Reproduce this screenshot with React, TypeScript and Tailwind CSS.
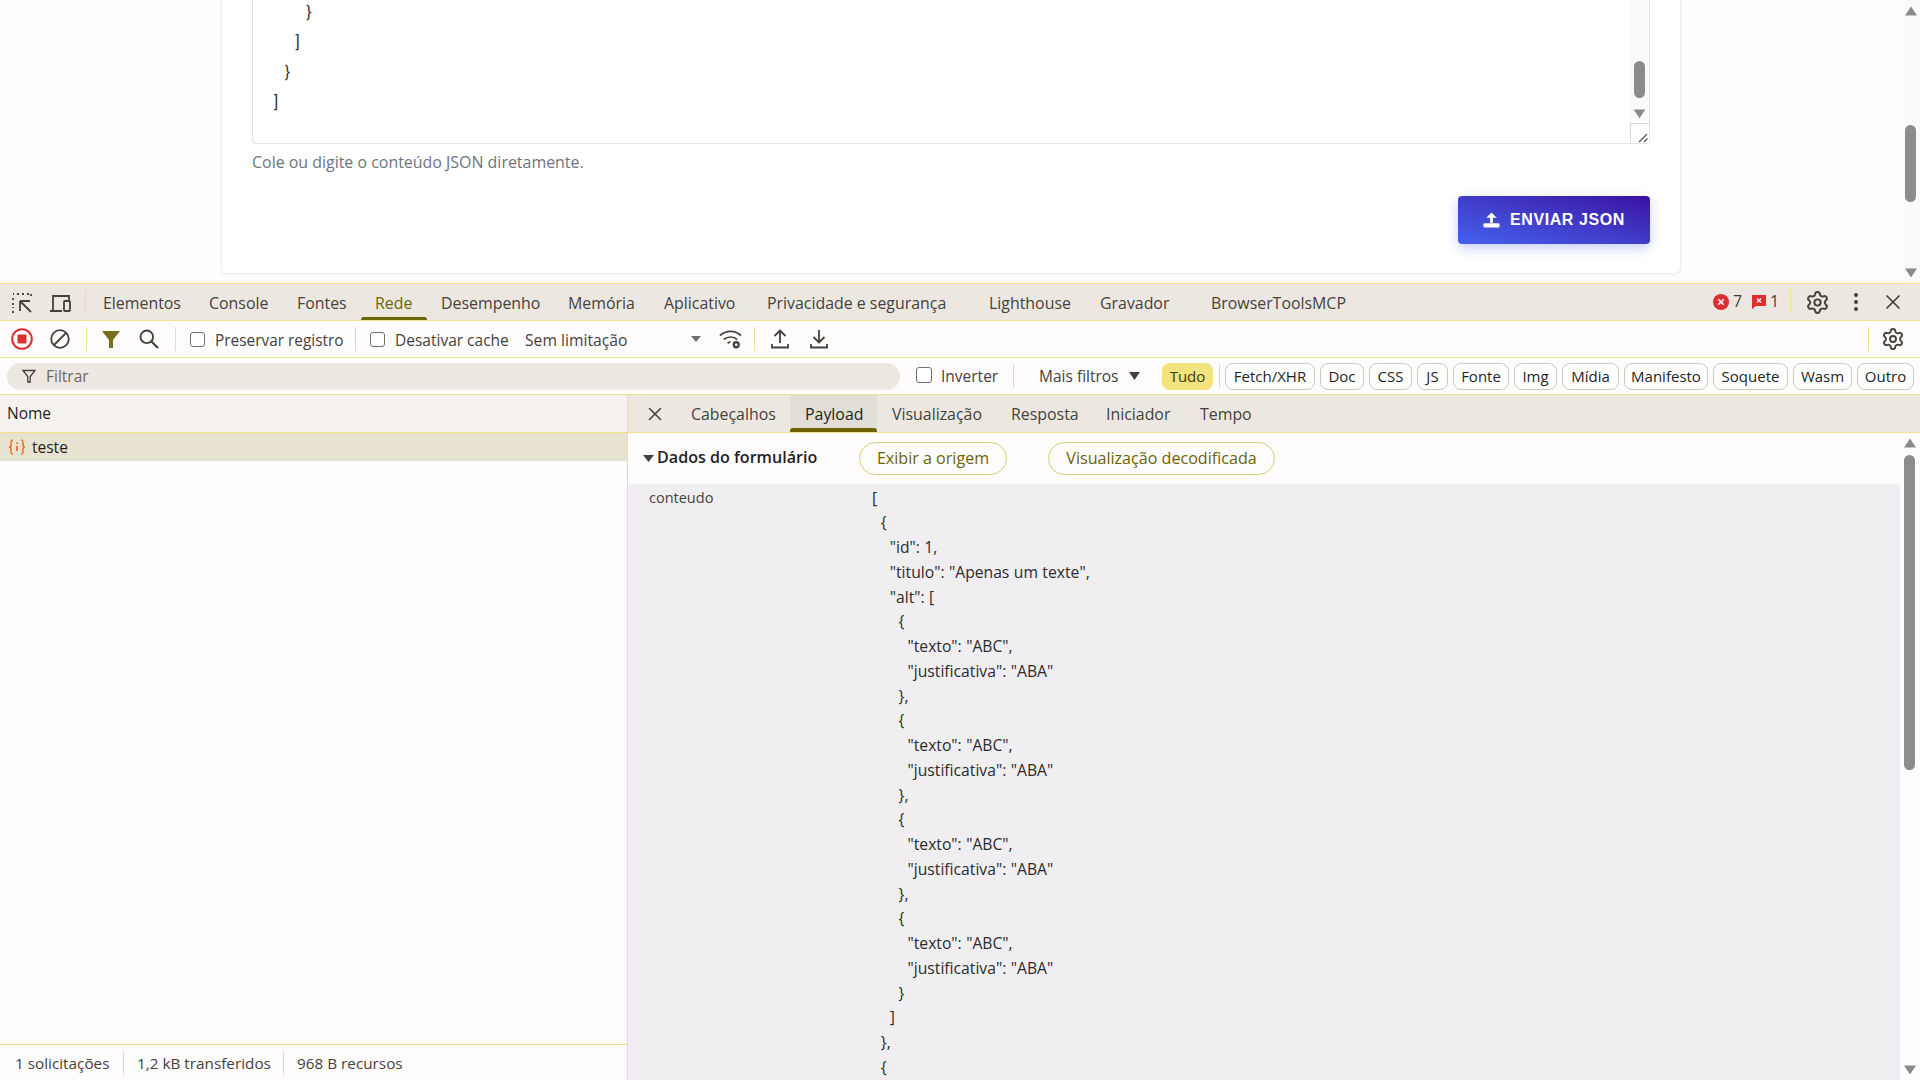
import React from "react";
import { Settings, X } from "lucide-react";

const Sep = ({ cls }: { cls: string }) => <div className={`w-px h-[24px] bg-[#f0e28a] shrink-0 ${cls}`} />;

const Tri = ({ dir, cls }: { dir: "up" | "down"; cls: string }) => (
  <svg viewBox="0 0 12 10" className={cls} fill="#8a8a8a">
    {dir === "up" ? <path d="M6 0.5 L12 9.5 H0 Z" /> : <path d="M0 0.5 H12 L6 9.5 Z" />}
  </svg>
);

const Check = ({ cls }: { cls: string }) => (
  <input type="checkbox" readOnly className={`appearance-none w-[15px] h-[15px] border border-[#6f6f6f] rounded-[3px] bg-white shrink-0 ${cls}`} />
);

const tabs: [string, string, boolean?][] = [
  ["Elementos", "w-[106px]"],
  ["Console", "w-[88px]"],
  ["Fontes", "w-[78px]"],
  ["Rede", "w-[66px]", true],
  ["Desempenho", "w-[127px]"],
  ["Memória", "w-[96px]"],
  ["Aplicativo", "w-[103px]"],
  ["Privacidade e segurança", "w-[222px]"],
  ["Lighthouse", "w-[111px]"],
  ["Gravador", "w-[111px]"],
  ["BrowserToolsMCP", "w-[160px]"],
];

const chips: [string, string][] = [
  ["Fetch/XHR", "w-[90px]"],
  ["Doc", "w-[44px]"],
  ["CSS", "w-[43px]"],
  ["JS", "w-[31px]"],
  ["Fonte", "w-[56px]"],
  ["Img", "w-[43px]"],
  ["Mídia", "w-[57px]"],
  ["Manifesto", "w-[84px]"],
  ["Soquete", "w-[75px]"],
  ["Wasm", "w-[59px]"],
  ["Outro", "w-[57px]"],
];

const detailTabs: [string, string, boolean?][] = [
  ["Cabeçalhos", "w-[114px]"],
  ["Payload", "w-[87px]", true],
  ["Visualização", "w-[119px]"],
  ["Resposta", "w-[95px]"],
  ["Iniciador", "w-[94px]"],
  ["Tempo", "w-[80px]"],
];

const json = `[
  {
    "id": 1,
    "titulo": "Apenas um texte",
    "alt": [
      {
        "texto": "ABC",
        "justificativa": "ABA"
      },
      {
        "texto": "ABC",
        "justificativa": "ABA"
      },
      {
        "texto": "ABC",
        "justificativa": "ABA"
      },
      {
        "texto": "ABC",
        "justificativa": "ABA"
      }
    ]
  },
  {`;

export default function App() {
  return (
    <div className="w-[1920px] h-[1080px] overflow-hidden flex flex-col bg-white font-['Open_Sans',sans-serif] text-[15.5px] text-[#45423a]">
      {/* Page */}
      <div className="h-[283px] flex shrink-0 bg-[#fefefe]">
        <div className="w-[1904px] pl-[221px]">
          <div className="w-[1460px] h-[274px] bg-white rounded-b-[6px] border-x border-b border-[#ececec] shadow-[0_1px_3px_rgba(0,0,0,0.06)] pl-[30px] pr-[30px] flex flex-col">
            <div className="h-[144px] border-x border-b border-[#e3e5e8] rounded-b-[4px] flex shrink-0">
              <pre className="flex-1 pl-[21px] font-['Roboto',sans-serif] text-[16px] tracking-[1.4px] leading-[30px] text-[#33373b] -mt-[2px]">{`      }
    ]
  }
]`}</pre>
              <div className="w-[19px] bg-[#fafafa] flex flex-col items-center">
                <div className="w-[11px] h-[38px] rounded-full bg-[#8c8c8c] mt-[61px]" />
                <Tri dir="down" cls="w-[13px] h-[10px] mt-[11px]" />
                <div className="w-[19px] h-[20px] mt-[4px] border-l border-t border-[#d9d9d9] bg-white flex items-end justify-end">
                  <svg viewBox="0 0 12 12" className="w-[12px] h-[12px]" stroke="#555" strokeWidth="1.2">
                    <path d="M2 11 L10 3 M7 11 L10.5 7.5" />
                  </svg>
                </div>
              </div>
            </div>
            <div className="mt-[8px] text-[15.95px] leading-[20px] text-[#6c757d]">Cole ou digite o conteúdo JSON diretamente.</div>
            <div className="flex justify-end mt-[24px]">
              <div className="w-[192px] h-[48px] rounded-[4px] bg-linear-to-tr from-[#4361ee] to-[#3a0ca3] shadow-[0_4px_12px_rgba(67,97,238,0.3)] flex items-center justify-center gap-[10px] text-white font-['Liberation_Sans',sans-serif] font-bold text-[16px] tracking-[0.6px]">
                <svg viewBox="0 0 18 16" className="w-[17px] h-[16px]" fill="#fff">
                  <path d="M9 0 L14.5 5.5 H10.5 V11 H7.5 V5.5 H3.5 Z" />
                  <rect x="0.5" y="11.5" width="17" height="4.5" rx="1" />
                </svg>
                ENVIAR JSON
              </div>
            </div>
          </div>
        </div>
        <div className="w-[16px] bg-[#fafafa] flex flex-col items-start pl-[1px]">
          <Tri dir="up" cls="w-[12px] h-[10px] mt-[6px]" />
          <div className="w-[11px] h-[77px] rounded-full bg-[#8c8c8c] mt-[109px]" />
          <Tri dir="down" cls="w-[12px] h-[10px] mt-[66px]" />
        </div>
      </div>

      {/* Main tabs */}
      <div className="h-[38px] shrink-0 bg-[#ece8e1] border-y border-[#f0e28a] flex items-center text-[15.9px]">
        <svg viewBox="0 0 24 24" className="w-[24px] h-[24px] ml-[10px] mt-[2px] shrink-0" fill="none" stroke="#45423a" strokeWidth="1.8">
          <path d="M3 16v1M3 3h1M7 3h2M12 3h2M17 3h2M21 3v3M3 7v2M3 12v2M3 20v1h1" strokeDasharray="2 1" />
          <path d="M10 10h10M10 10v10M10.5 10.5 L21 21" />
        </svg>
        <svg viewBox="0 0 24 24" className="w-[24px] h-[24px] ml-[14px] mt-[2px] shrink-0" fill="none" stroke="#45423a" strokeWidth="1.8">
          <path d="M2 20h12M5 19V5h16v4" />
          <rect x="16" y="10" width="6" height="10" rx="1" />
        </svg>
        <Sep cls="ml-[13px] mr-[3px]" />
        {tabs.map(([t, w, active]) => (
          <div key={t} className={`relative h-full flex items-center pl-[14px] pt-[4px] shrink-0 whitespace-nowrap ${w} ${active ? "text-[#6b6400]" : ""}`}>
            {t}
            {active && <div className="absolute left-0 right-0 bottom-0 h-[3px] bg-[#6b6400] rounded-t-[3px]" />}
          </div>
        ))}
        <svg viewBox="0 0 16 16" className="w-[16px] h-[16px] ml-auto shrink-0">
          <circle cx="8" cy="8" r="8" fill="#dc2f2f" />
          <path d="M5.3 5.3 L10.7 10.7 M10.7 5.3 L5.3 10.7" stroke="#fff" strokeWidth="1.6" />
        </svg>
        <span className="ml-[4px] w-[12px]">7</span>
        <svg viewBox="0 0 14 14" className="w-[14px] h-[14px] ml-[7px] shrink-0">
          <path d="M0 0 H14 V11 H4 L0 14 Z" fill="#dc2f2f" />
          <path d="M5 3.5 L9 7.5 M9 3.5 L5 7.5" stroke="#fff" strokeWidth="1.2" />
        </svg>
        <span className="ml-[4px] w-[10px]">1</span>
        <Sep cls="ml-[10px]" />
        <Settings className="w-[25px] h-[25px] ml-[14px] shrink-0" strokeWidth={1.9} color="#45423a" />
        <svg viewBox="0 0 4 20" className="w-[4px] h-[20px] ml-[24px] shrink-0" fill="#45423a">
          <circle cx="2" cy="3" r="2" />
          <circle cx="2" cy="10" r="2" />
          <circle cx="2" cy="17" r="2" />
        </svg>
        <X className="w-[24px] h-[24px] ml-[23px] mr-[15px] shrink-0" strokeWidth={1.7} color="#45423a" />
      </div>

      {/* Toolbar */}
      <div className="h-[37px] shrink-0 bg-[#fffcfe] border-b border-[#f0e28a] flex items-center whitespace-nowrap">
        <svg viewBox="0 0 22 22" className="w-[22px] h-[22px] ml-[11px] shrink-0">
          <circle cx="11" cy="11" r="9.8" fill="none" stroke="#dc2f2f" strokeWidth="2" />
          <rect x="6.5" y="6.5" width="9" height="9" rx="1" fill="#dc2f2f" />
        </svg>
        <svg viewBox="0 0 20 20" className="w-[20px] h-[20px] ml-[17px] shrink-0" fill="none" stroke="#45423a" strokeWidth="1.8">
          <circle cx="10" cy="10" r="8.8" />
          <path d="M4 16 L16 4" />
        </svg>
        <Sep cls="ml-[16px]" />
        <svg viewBox="0 0 20 20" className="w-[20px] h-[20px] ml-[14px] shrink-0" fill="#77701c">
          <path d="M1 2 H19 L12 11 V19 H8 V11 Z" />
        </svg>
        <svg viewBox="0 0 20 20" className="w-[20px] h-[20px] ml-[18px] shrink-0" fill="none" stroke="#45423a" strokeWidth="1.9">
          <circle cx="7.8" cy="7.8" r="6.3" />
          <path d="M12.5 12.5 L19 19" strokeWidth="2.2" />
        </svg>
        <Sep cls="ml-[16px]" />
        <Check cls="ml-[14px]" />
        <span className="ml-[10px] w-[127px] pt-[3px] text-[15.4px]">Preservar registro</span>
        <Sep cls="ml-[13px]" />
        <Check cls="ml-[14px]" />
        <span className="ml-[10px] w-[112px] pt-[3px]">Desativar cache</span>
        <span className="ml-[18px] w-[103px] pt-[3px] text-[15.7px]">Sem limitação</span>
        <svg viewBox="0 0 10 6" className="w-[10px] h-[6px] ml-[63px] shrink-0" fill="#6f6f6f">
          <path d="M0 0 H10 L5 6 Z" />
        </svg>
        <svg viewBox="0 0 24 22" className="w-[23px] h-[21px] ml-[18px] shrink-0" fill="none" stroke="#45423a" strokeWidth="1.8">
          <path d="M1 7 C7 1 17 1 23 7 M5 11 C9 7.5 15 7.5 19 11 M9 15 C10 14 11 13.5 12 13.5" />
          <circle cx="18" cy="16.5" r="2.6" strokeWidth="2.4" />
        </svg>
        <Sep cls="ml-[12px]" />
        <svg viewBox="0 0 18 20" className="w-[18px] h-[20px] ml-[16px] shrink-0" fill="none" stroke="#45423a" strokeWidth="1.8">
          <path d="M9 14 V2 M3.5 7 L9 1.5 L14.5 7 M1 15 V18.5 H17 V15" />
        </svg>
        <svg viewBox="0 0 18 20" className="w-[18px] h-[20px] ml-[21px] shrink-0" fill="none" stroke="#45423a" strokeWidth="1.8">
          <path d="M9 1 V13 M3.5 8 L9 13.5 L14.5 8 M1 15 V18.5 H17 V15" />
        </svg>
        <Sep cls="ml-auto" />
        <Settings className="w-[24px] h-[24px] ml-[12px] mr-[15px] shrink-0" strokeWidth={1.9} color="#45423a" />
      </div>

      {/* Filter bar */}
      <div className="h-[37px] shrink-0 bg-[#fffcfe] border-b border-[#f0e28a] flex items-center whitespace-nowrap pl-[7px]">
        <div className="w-[893px] h-[27px] rounded-full bg-[#ece8e1] flex items-center pl-[15px] shrink-0">
          <svg viewBox="0 0 14 14" className="w-[14px] h-[14px] shrink-0" fill="none" stroke="#45423a" strokeWidth="1.3">
            <path d="M1 1.5 H13 L8.2 7.5 V13 H5.8 V7.5 Z" />
          </svg>
          <span className="ml-[10px] pt-[2px] text-[#6c685e]">Filtrar</span>
        </div>
        <input type="checkbox" readOnly className="appearance-none w-[16px] h-[16px] ml-[16px] mb-[2px] border border-[#6f6f6f] rounded-[3px] bg-white shrink-0" />
        <span className="ml-[9px] w-[56px] pt-[1px]">Inverter</span>
        <Sep cls="ml-[16px]" />
        <span className="ml-[25px] w-[79px] pt-[1px]">Mais filtros</span>
        <svg viewBox="0 0 11 8" className="w-[11px] h-[8px] ml-[11px] shrink-0" fill="#45423a">
          <path d="M0 0 H11 L5.5 8 Z" />
        </svg>
        <div className="ml-[22px] w-[51px] h-[27px] pt-[1px] rounded-[8px] bg-[#f2e37c] text-[#3f3a12] text-[15px] flex items-center justify-center shrink-0">Tudo</div>
        <Sep cls="ml-[6px]" />
        {chips.map(([t, w]) => (
          <div key={t} className={`ml-[5px] ${w} h-[27px] pt-[1px] rounded-[8px] border border-[#cfc9bb] bg-white text-[#1f1f1f] text-[15px] flex items-center justify-center shrink-0`}>{t}</div>
        ))}
      </div>

      {/* Split */}
      <div className="flex-1 flex min-h-0 bg-[#fffcfe]">
        <div className="w-[628px] shrink-0 border-r border-[#f0e28a] flex flex-col">
          <div className="h-[38px] shrink-0 bg-[#f6f2ef] border-b border-[#f0e28a] flex items-center pl-[7px] pt-[1px] text-[#1f1f1f]">Nome</div>
          <div className="h-[28px] shrink-0 bg-[#e8e2d0] flex items-center pl-[8px] text-[#1f1f1f]">
            <svg viewBox="0 0 18 16" className="w-[18px] h-[16px] shrink-0" fill="none" stroke="#e8702a" strokeWidth="1.5">
              <path d="M5 1 C3 1 3 2 3 4 V6 C3 7.5 2.5 8 1 8 C2.5 8 3 8.5 3 10 V12 C3 14 3 15 5 15" />
              <path d="M13 1 C15 1 15 2 15 4 V6 C15 7.5 15.5 8 17 8 C15.5 8 15 8.5 15 10 V12 C15 14 15 15 13 15" />
              <path d="M9 7 V12 M9 3.5 V5" strokeWidth="1.8" />
            </svg>
            <span className="ml-[6px] pt-[1px]">teste</span>
          </div>
          <div className="flex-1" />
          <div className="h-[36px] shrink-0 border-t border-[#f0e28a] flex items-center pl-[15px] whitespace-nowrap text-[15.3px]">
            <span className="w-[95px] pt-[1px]">1 solicitações</span>
            <Sep cls="ml-[13px]" />
            <span className="ml-[13px] w-[133px] pt-[1px]">1,2 kB transferidos</span>
            <Sep cls="ml-[13px]" />
            <span className="ml-[13px] pt-[1px]">968 B recursos</span>
          </div>
        </div>
        <div className="flex-1 min-w-0 flex flex-col">
          <div className="h-[38px] shrink-0 bg-[#ece8e1] border-b border-[#f0e28a] flex items-center whitespace-nowrap text-[15.9px]">
            <X className="w-[22px] h-[22px] ml-[16px] mr-[10px] shrink-0" strokeWidth={1.7} color="#45423a" />
            {detailTabs.map(([t, w, active]) => (
              <div key={t} className={`relative h-full flex items-center pl-[15px] pt-[3px] shrink-0 ${w} ${active ? "bg-[#e2ddd5] text-[#1f1f1f]" : ""}`}>
                {t}
                {active && <div className="absolute left-0 right-0 bottom-0 h-[4px] bg-[#6b6400] rounded-t-[3px]" />}
              </div>
            ))}
          </div>
          <div className="flex-1 min-h-0 flex">
            <div className="flex-1 min-w-0 flex flex-col overflow-hidden">
              <div className="h-[51px] shrink-0 flex items-center pl-[15px] whitespace-nowrap text-[16.1px]">
                <svg viewBox="0 0 11 7" className="w-[11px] h-[7px] shrink-0" fill="#45423a">
                  <path d="M0 0 H11 L5.5 7 Z" />
                </svg>
                <span className="ml-[3px] w-[161px] pb-[2px] font-semibold text-[#1f1f1f]">Dados do formulário</span>
                <div className="ml-[41px] w-[148px] h-[33px] rounded-full border border-[#d8cd72] text-[#6b6400] flex items-center justify-center">Exibir a origem</div>
                <div className="ml-[41px] w-[227px] h-[33px] rounded-full border border-[#d8cd72] text-[#6b6400] flex items-center justify-center">Visualização decodificada</div>
              </div>
              <div className="flex-1 bg-[#f1eef1] flex items-start overflow-hidden pt-[1.5px]">
                <span className="ml-[21px] w-[223px] shrink-0 text-[14.5px] font-medium leading-[24.75px]">conteudo</span>
                <pre className="font-['Open_Sans',sans-serif] text-[15.7px] [word-spacing:0.36px] leading-[24.75px] text-[#2b2b2b]">{json}</pre>
              </div>
            </div>
            <div className="w-[20px] shrink-0 flex flex-col items-start pl-[4px]">
              <Tri dir="up" cls="w-[12px] h-[10px] mt-[5px]" />
              <div className="w-[11px] h-[315px] rounded-full bg-[#8c8c8c] mt-[7px]" />
              <Tri dir="down" cls="w-[12px] h-[10px] mt-[295px]" />
            </div>
          </div>
        </div>
      </div>
    </div>
  );
}
